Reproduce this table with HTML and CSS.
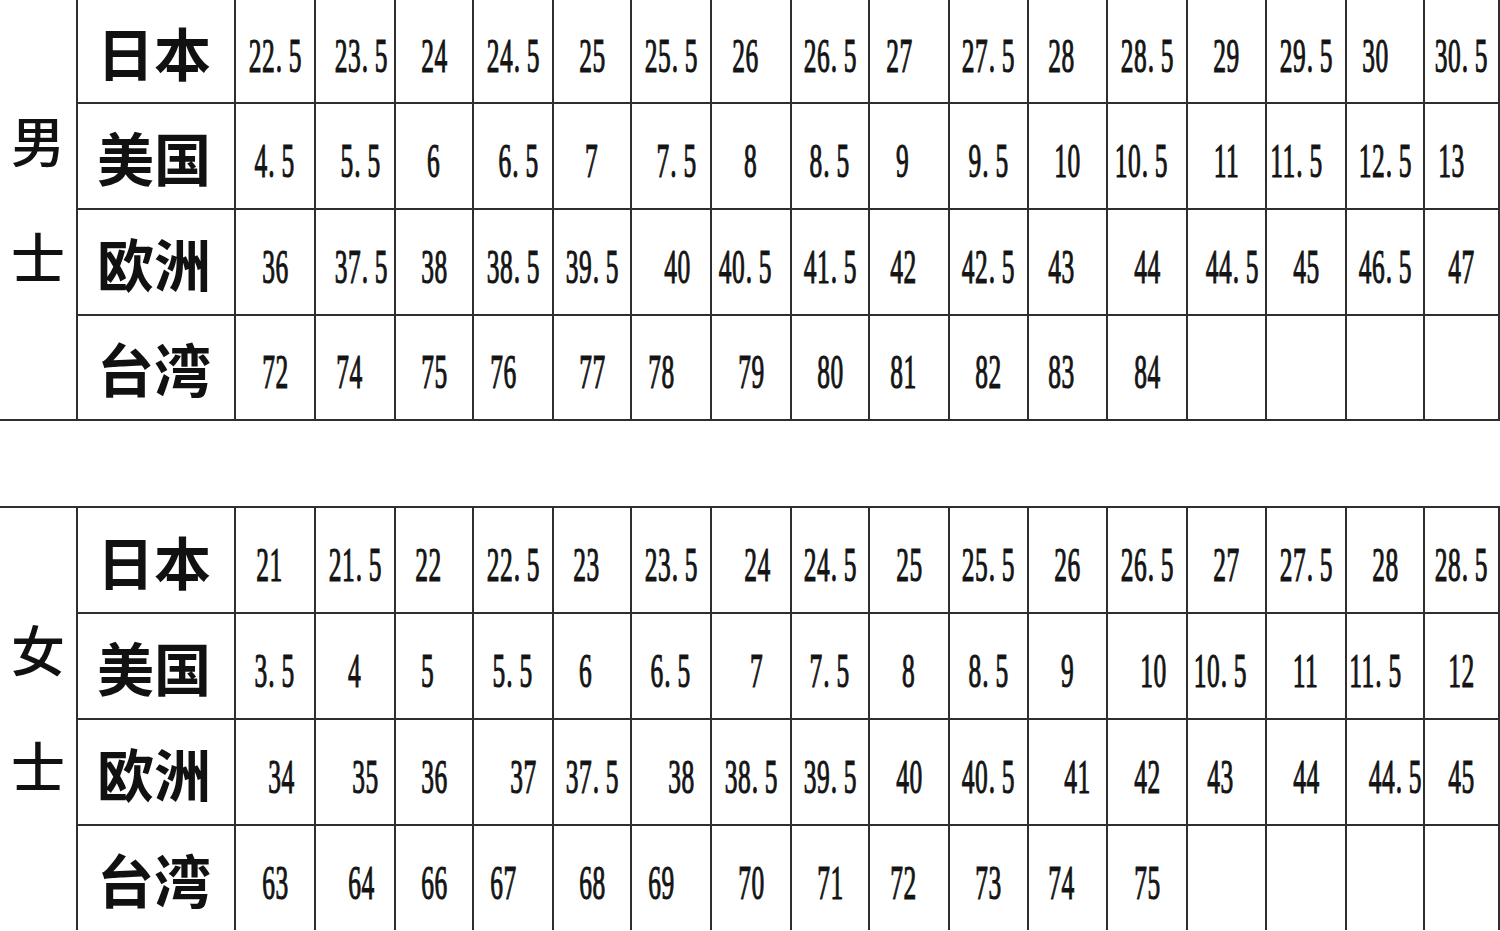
FILE: index.html
```html
<!DOCTYPE html>
<html lang="zh-CN">
<head>
<meta charset="utf-8">
<title>鞋码对照表</title>
<link rel="stylesheet" href="styles.css">
</head>
<body>
<div class="page">
  <div class="chart chart-top">
    <div class="gender"><span>男</span><span>士</span></div>
    <div class="label">日本</div>
    <div class="c"><span class="n">22<span class="d">.</span>5</span></div><div class="c"><span class="n r1">23<span class="d">.</span>5</span></div><div class="c"><span class="n">24</span></div><div class="c"><span class="n">24<span class="d">.</span>5</span></div><div class="c"><span class="n">25</span></div><div class="c"><span class="n">25<span class="d">.</span>5</span></div><div class="c"><span class="n l1">26</span></div><div class="c"><span class="n">26<span class="d">.</span>5</span></div><div class="c"><span class="n l2">27</span></div><div class="c"><span class="n">27<span class="d">.</span>5</span></div><div class="c"><span class="n l1">28</span></div><div class="c"><span class="n">28<span class="d">.</span>5</span></div><div class="c"><span class="n">29</span></div><div class="c"><span class="n">29<span class="d">.</span>5</span></div><div class="c"><span class="n l2">30</span></div><div class="c"><span class="n">30<span class="d">.</span>5</span></div>
    <div class="label">美国</div>
    <div class="c"><span class="n">4<span class="d">.</span>5</span></div><div class="c"><span class="n r1">5<span class="d">.</span>5</span></div><div class="c"><span class="n">6</span></div><div class="c"><span class="n r1">6<span class="d">.</span>5</span></div><div class="c"><span class="n">7</span></div><div class="c"><span class="n r1">7<span class="d">.</span>5</span></div><div class="c"><span class="n">8</span></div><div class="c"><span class="n">8<span class="d">.</span>5</span></div><div class="c"><span class="n l1">9</span></div><div class="c"><span class="n">9<span class="d">.</span>5</span></div><div class="c"><span class="n">10</span></div><div class="c"><span class="n l1">10<span class="d">.</span>5</span></div><div class="c"><span class="n">11</span></div><div class="c"><span class="n l2">11<span class="d">.</span>5</span></div><div class="c"><span class="n">12<span class="d">.</span>5</span></div><div class="c"><span class="n l2">13</span></div>
    <div class="label">欧洲</div>
    <div class="c"><span class="n">36</span></div><div class="c"><span class="n r1">37<span class="d">.</span>5</span></div><div class="c"><span class="n">38</span></div><div class="c"><span class="n">38<span class="d">.</span>5</span></div><div class="c"><span class="n">39<span class="d">.</span>5</span></div><div class="c"><span class="n r1">40</span></div><div class="c"><span class="n l1">40<span class="d">.</span>5</span></div><div class="c"><span class="n">41<span class="d">.</span>5</span></div><div class="c"><span class="n l1">42</span></div><div class="c"><span class="n">42<span class="d">.</span>5</span></div><div class="c"><span class="n l1">43</span></div><div class="c"><span class="n">44</span></div><div class="c"><span class="n r1">44<span class="d">.</span>5</span></div><div class="c"><span class="n">45</span></div><div class="c"><span class="n">46<span class="d">.</span>5</span></div><div class="c"><span class="n">47</span></div>
    <div class="label">台湾</div>
    <div class="c"><span class="n">72</span></div><div class="c"><span class="n l1">74</span></div><div class="c"><span class="n">75</span></div><div class="c"><span class="n l2">76</span></div><div class="c"><span class="n">77</span></div><div class="c"><span class="n l2">78</span></div><div class="c"><span class="n">79</span></div><div class="c"><span class="n">80</span></div><div class="c"><span class="n l1">81</span></div><div class="c"><span class="n">82</span></div><div class="c"><span class="n l1">83</span></div><div class="c"><span class="n">84</span></div><div class="c"></div><div class="c"></div><div class="c"></div><div class="c"></div>
  </div>

  <div class="chart chart-bottom">
    <div class="gender"><span>女</span><span>士</span></div>
    <div class="label">日本</div>
    <div class="c"><span class="n l1">21</span></div><div class="c"><span class="n">21<span class="d">.</span>5</span></div><div class="c"><span class="n l1">22</span></div><div class="c"><span class="n">22<span class="d">.</span>5</span></div><div class="c"><span class="n l1">23</span></div><div class="c"><span class="n">23<span class="d">.</span>5</span></div><div class="c"><span class="n r1">24</span></div><div class="c"><span class="n">24<span class="d">.</span>5</span></div><div class="c"><span class="n">25</span></div><div class="c"><span class="n">25<span class="d">.</span>5</span></div><div class="c"><span class="n">26</span></div><div class="c"><span class="n">26<span class="d">.</span>5</span></div><div class="c"><span class="n">27</span></div><div class="c"><span class="n">27<span class="d">.</span>5</span></div><div class="c"><span class="n">28</span></div><div class="c"><span class="n">28<span class="d">.</span>5</span></div>
    <div class="label">美国</div>
    <div class="c"><span class="n">3<span class="d">.</span>5</span></div><div class="c"><span class="n">4</span></div><div class="c"><span class="n l1">5</span></div><div class="c"><span class="n">5<span class="d">.</span>5</span></div><div class="c"><span class="n l1">6</span></div><div class="c"><span class="n">6<span class="d">.</span>5</span></div><div class="c"><span class="n r1">7</span></div><div class="c"><span class="n">7<span class="d">.</span>5</span></div><div class="c"><span class="n">8</span></div><div class="c"><span class="n">8<span class="d">.</span>5</span></div><div class="c"><span class="n">9</span></div><div class="c"><span class="n r1">10</span></div><div class="c"><span class="n l1">10<span class="d">.</span>5</span></div><div class="c"><span class="n">11</span></div><div class="c"><span class="n l2">11<span class="d">.</span>5</span></div><div class="c"><span class="n">12</span></div>
    <div class="label">欧洲</div>
    <div class="c"><span class="n r1">34</span></div><div class="c"><span class="n r2">35</span></div><div class="c"><span class="n">36</span></div><div class="c"><span class="n r2">37</span></div><div class="c"><span class="n">37<span class="d">.</span>5</span></div><div class="c"><span class="n r2">38</span></div><div class="c"><span class="n">38<span class="d">.</span>5</span></div><div class="c"><span class="n">39<span class="d">.</span>5</span></div><div class="c"><span class="n">40</span></div><div class="c"><span class="n">40<span class="d">.</span>5</span></div><div class="c"><span class="n r2">41</span></div><div class="c"><span class="n">42</span></div><div class="c"><span class="n l1">43</span></div><div class="c"><span class="n">44</span></div><div class="c"><span class="n r2">44<span class="d">.</span>5</span></div><div class="c"><span class="n">45</span></div>
    <div class="label">台湾</div>
    <div class="c"><span class="n">63</span></div><div class="c"><span class="n r1">64</span></div><div class="c"><span class="n">66</span></div><div class="c"><span class="n l2">67</span></div><div class="c"><span class="n">68</span></div><div class="c"><span class="n l2">69</span></div><div class="c"><span class="n">70</span></div><div class="c"><span class="n">71</span></div><div class="c"><span class="n l1">72</span></div><div class="c"><span class="n">73</span></div><div class="c"><span class="n l1">74</span></div><div class="c"><span class="n">75</span></div><div class="c"></div><div class="c"></div><div class="c"></div><div class="c"></div>
  </div>
</div>
</body>
</html>
```

FILE: styles.css
```css
html, body {
  margin: 0;
  padding: 0;
  background: #ffffff;
}

body {
  width: 1500px;
  height: 931px;
  overflow: hidden;
  font-family: "Liberation Serif", serif;
  color: #111111;
}

.page {
  display: flex;
  flex-direction: column;
}

.chart {
  display: grid;
  width: max-content;
  grid-template-columns: 76px 156px 78px 78px 76px 78px 76px 78px 78px 76px 78px 77px 77px 78px 77px 78px 76px 73px;
  gap: 2px;
  padding-right: 2px;
  background: #2e2e2e;
}

.chart-top {
  grid-template-rows: 102px 104px 104px 103px;
  padding-bottom: 2px;
}

.chart-bottom {
  grid-template-rows: 104px 104px 104px 104px;
  padding-top: 2px;
  margin-top: 85px;
}

.chart > div {
  background: #ffffff;
}

.gender {
  grid-row: 1 / span 4;
  display: flex;
  flex-direction: column;
  align-items: center;
  justify-content: center;
  padding-bottom: 24px;
  font-family: "Noto Sans CJK SC", sans-serif;
  font-weight: 500;
  font-size: 54px;
  line-height: 116px;
  color: #111111;
}

.label {
  display: flex;
  align-items: center;
  justify-content: center;
  padding-right: 4px;
  font-family: "Noto Sans CJK SC", sans-serif;
  font-weight: 700;
  font-size: 57px;
  line-height: 1;
  color: #111111;
}

.c {
  display: flex;
  align-items: center;
  justify-content: center;
  overflow: visible;
  padding-top: 8px;
}

.n {
  display: inline-block;
  font-family: "Liberation Serif", serif;
  font-weight: 400;
  font-size: 49px;
  line-height: 1;
  letter-spacing: 1px;
  white-space: nowrap;
  color: #141414;
  -webkit-text-stroke: 1.2px #141414;
  transform: scaleX(0.52);
  transform-origin: center;
}

.n .d {
  margin-left: 1px;
  margin-right: 12px;
}

.n.l1 { transform: translateX(-6px) scaleX(0.52); }
.n.l2 { transform: translateX(-10px) scaleX(0.52); }
.n.r1 { transform: translateX(6px) scaleX(0.52); }
.n.r2 { transform: translateX(10px) scaleX(0.52); }
```
